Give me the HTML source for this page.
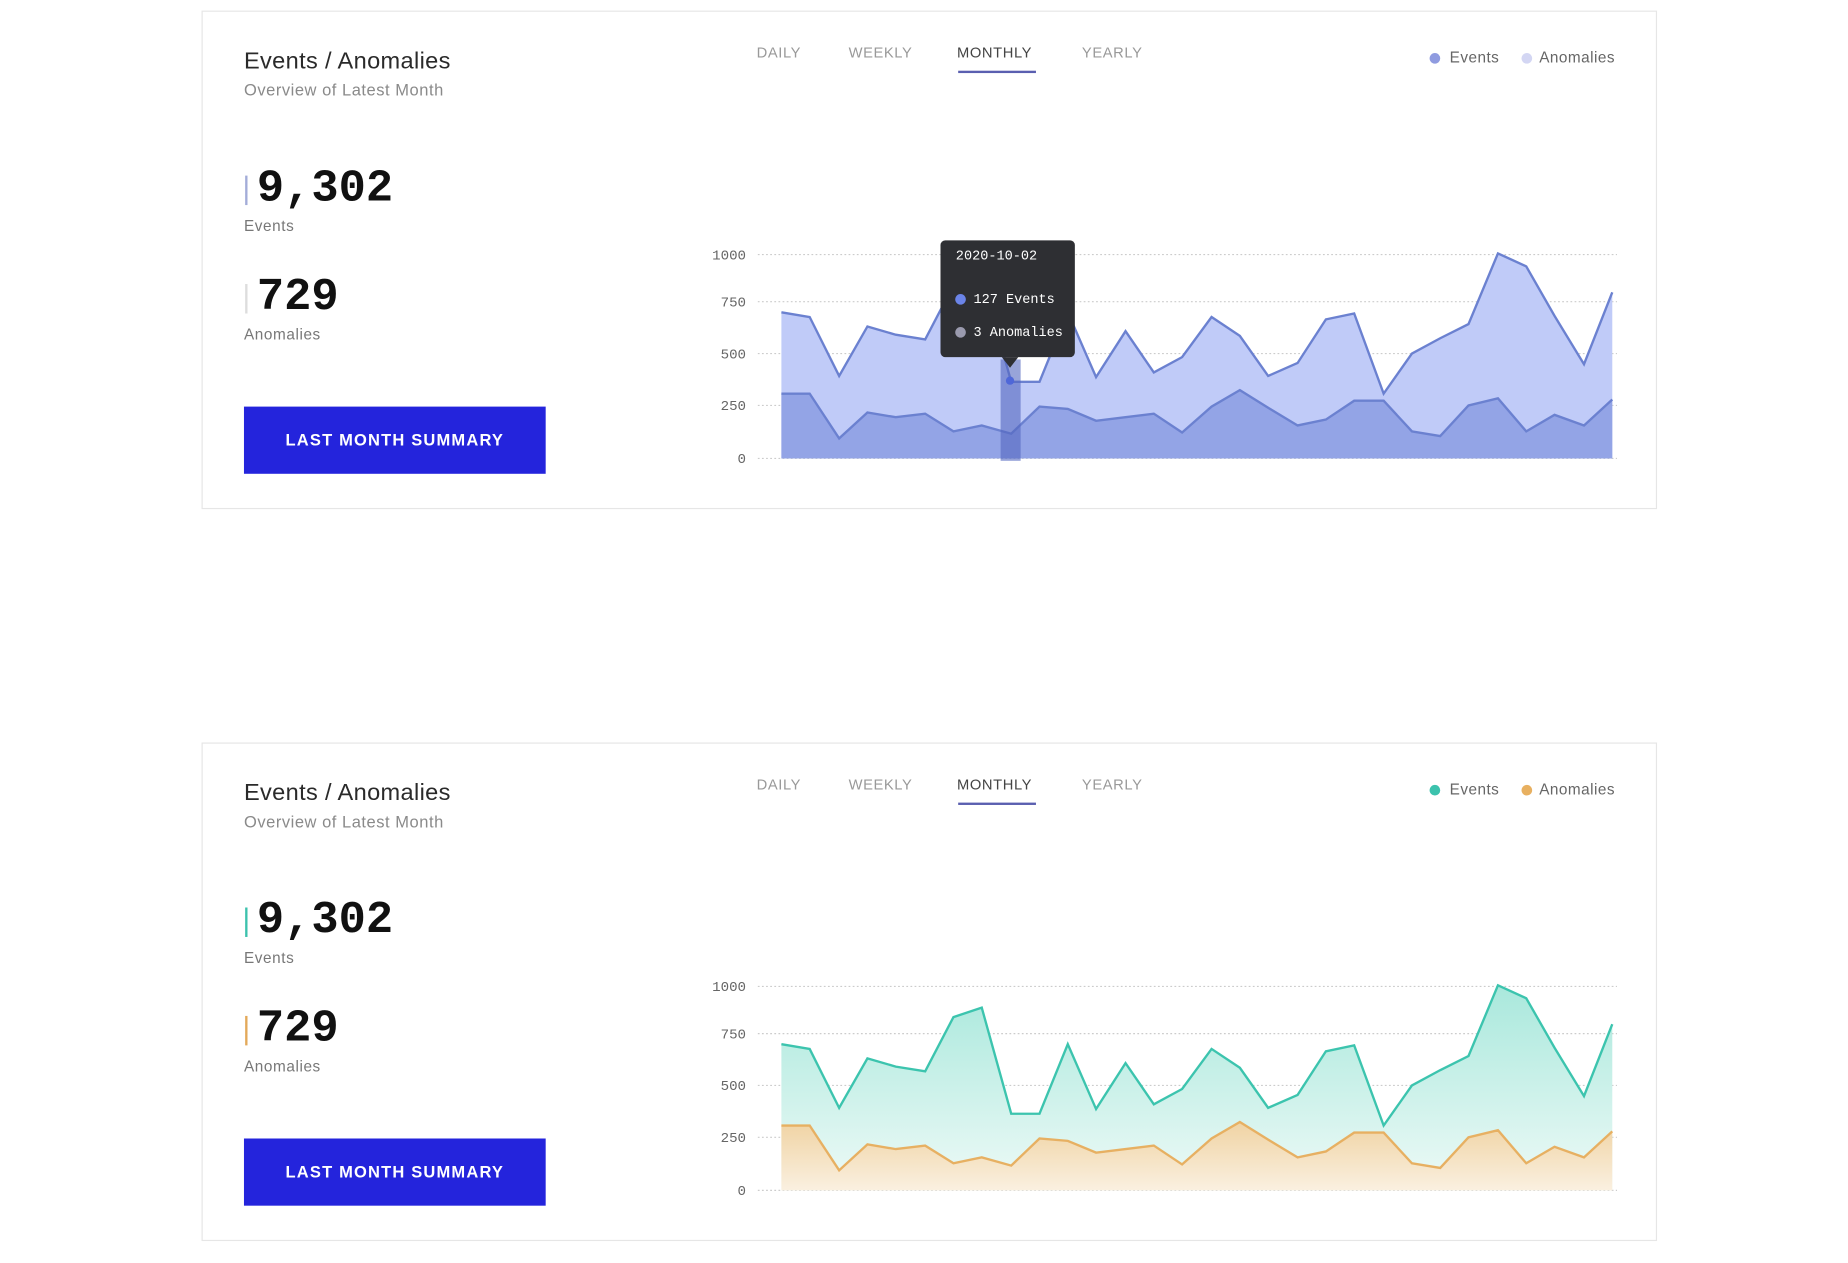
<!DOCTYPE html>
<html><head><meta charset="utf-8">
<style>
html,body{margin:0;padding:0;background:#fff;width:1848px;height:1263px;overflow:hidden}
#w{position:absolute;left:0;top:0;width:1568px;height:1072px;transform:scale(1.17857);transform-origin:0 0;font-family:"Liberation Sans",sans-serif}
.card{position:absolute;left:171px;width:1235px;height:423px;border:1px solid #e6e6e6;box-sizing:border-box;background:#fff}
.t{position:absolute;left:35px;top:31px;font-size:20px;color:#2a2a2a;letter-spacing:.3px;font-weight:normal}
.s{position:absolute;left:35px;top:58px;font-size:14px;color:#8a8a8a;letter-spacing:.45px}
.num{position:absolute;left:35px;font-family:"Liberation Mono",monospace;font-weight:bold;font-size:38.5px;color:#111;padding-left:11px;line-height:40px}
.num:before{content:"";position:absolute;left:1px;top:9px;width:2px;height:25px;background:var(--c)}
.lab{position:absolute;left:35px;font-size:13px;color:#777;letter-spacing:.5px}
.btn{position:absolute;left:35px;top:335px;width:256px;height:57px;background:#2424dc;color:#fff;font-weight:bold;font-size:14px;letter-spacing:1px;text-align:center;line-height:57px}
.tab{position:absolute;top:28px;font-size:12.5px;color:#999;letter-spacing:.5px}
.tab.a{color:#444}
.ul{position:absolute;left:641px;top:50px;width:66px;height:2px;background:#5a5fb0}
.lg{position:absolute;top:31px;font-size:13px;color:#666;letter-spacing:.4px}
.dot{position:absolute;top:35px;width:9px;height:9px;border-radius:50%}
svg{position:absolute;left:0;top:0}
.ax{font-family:"Liberation Mono",monospace;font-size:12px;fill:#666;text-anchor:end}
</style></head><body><div id="w">

<div class="card" style="top:9px">
<div class="t">Events / Anomalies</div><div class="s">Overview of Latest Month</div>
<div class="num" style="top:130px;--c:#a3acd8">9,302</div><div class="lab" style="top:174px">Events</div>
<div class="num" style="top:222px;--c:#ddd">729</div><div class="lab" style="top:266px">Anomalies</div>
<div class="btn">LAST MONTH SUMMARY</div>
<div class="tab" style="left:470px">DAILY</div><div class="tab" style="left:548px">WEEKLY</div><div class="tab a" style="left:640px">MONTHLY</div><div class="tab" style="left:746px">YEARLY</div><div class="ul"></div>
<div class="dot" style="left:1041px;background:#8f9be0"></div><div class="lg" style="left:1058px">Events</div>
<div class="dot" style="left:1119px;background:#d3d6f3"></div><div class="lg" style="left:1134px">Anomalies</div>
</div>

<div class="card" style="top:630px">
<div class="t">Events / Anomalies</div><div class="s">Overview of Latest Month</div>
<div class="num" style="top:130px;--c:#3cc2ad">9,302</div><div class="lab" style="top:174px">Events</div>
<div class="num" style="top:222px;--c:#e3a95a">729</div><div class="lab" style="top:266px">Anomalies</div>
<div class="btn">LAST MONTH SUMMARY</div>
<div class="tab" style="left:470px">DAILY</div><div class="tab" style="left:548px">WEEKLY</div><div class="tab a" style="left:640px">MONTHLY</div><div class="tab" style="left:746px">YEARLY</div><div class="ul"></div>
<div class="dot" style="left:1041px;background:#3cc2ad"></div><div class="lg" style="left:1058px">Events</div>
<div class="dot" style="left:1119px;background:#e8b060"></div><div class="lg" style="left:1134px">Anomalies</div>
</div>

<svg width="1568" height="1072" viewBox="0 0 1568 1072">
<defs>
<g id="grid">
<g stroke="#ccc" stroke-dasharray="1.5 2" stroke-width="1">
<line x1="643" y1="216" x2="1372" y2="216"/><line x1="643" y1="256" x2="1372" y2="256"/><line x1="643" y1="300" x2="1372" y2="300"/><line x1="643" y1="344" x2="1372" y2="344"/><line x1="643" y1="389" x2="1372" y2="389"/>
</g>
<text class="ax" x="633" y="220">1000</text><text class="ax" x="633" y="260">750</text><text class="ax" x="633" y="304">500</text><text class="ax" x="633" y="348">250</text><text class="ax" x="633" y="393">0</text>
</g>
<linearGradient id="gt" x1="0" y1="0" x2="0" y2="1"><stop offset="0" stop-color="#a9e8dc"/><stop offset="1" stop-color="#eefaf7"/></linearGradient>
<linearGradient id="go" x1="0" y1="0" x2="0" y2="1"><stop offset="0" stop-color="#f0d3a3"/><stop offset="1" stop-color="#faf0e0"/></linearGradient>
</defs>

<use href="#grid"/>
<path d="M663,389 L663,265 687,269 712,319 736,277 760,284 785,288 809,242 833,234 858,324 882,324 906,265 930,320 955,281 979,316 1003,303 1028,269 1052,285 1076,319 1101,308 1125,271 1149,266 1174,334 1198,300 1222,287 1246,275 1271,215 1295,226 1319,268 1344,309 1368,248 L1368,389Z" fill="#c0cbf8"/>
<polyline points="663,265 687,269 712,319 736,277 760,284 785,288 809,242 833,234 858,324 882,324 906,265 930,320 955,281 979,316 1003,303 1028,269 1052,285 1076,319 1101,308 1125,271 1149,266 1174,334 1198,300 1222,287 1246,275 1271,215 1295,226 1319,268 1344,309 1368,248" fill="none" stroke="#6b81d0" stroke-width="2"/>
<path d="M663,389 L663,334 687,334 712,372 736,350 760,354 785,351 809,366 833,361 858,368 882,345 906,347 930,357 955,354 979,351 1003,367 1028,345 1052,331 1076,346 1101,361 1125,356 1149,340 1174,340 1198,366 1222,370 1246,344 1271,338 1295,366 1319,352 1344,361 1368,339 L1368,389Z" fill="#93a4e6"/>
<polyline points="663,334 687,334 712,372 736,350 760,354 785,351 809,366 833,361 858,368 882,345 906,347 930,357 955,354 979,351 1003,367 1028,345 1052,331 1076,346 1101,361 1125,356 1149,340 1174,340 1198,366 1222,370 1246,344 1271,338 1295,366 1319,352 1344,361 1368,339" fill="none" stroke="#6b81d0" stroke-width="2"/>
<rect x="849" y="305" width="17" height="86" fill="#5468c0" opacity=".6"/>
<circle cx="857" cy="323" r="3.5" fill="#4f67d8"/>
<rect x="798" y="204" width="114" height="99" rx="4" fill="#2e2f33"/>
<path d="M850,303 L857,312 L864,303Z" fill="#2e2f33"/>
<text x="811" y="220" font-family="Liberation Mono,monospace" font-size="11.5" fill="#fff">2020-10-02</text>
<circle cx="815" cy="254" r="4.5" fill="#6b84e8"/>
<text x="826" y="257" font-family="Liberation Mono,monospace" font-size="11.5" fill="#fff">127 Events</text>
<circle cx="815" cy="282" r="4.5" fill="#9a9aae"/>
<text x="826" y="285" font-family="Liberation Mono,monospace" font-size="11.5" fill="#fff">3 Anomalies</text>

<g transform="translate(0,621)">
<use href="#grid"/>
<path d="M663,389 L663,265 687,269 712,319 736,277 760,284 785,288 809,242 833,234 858,324 882,324 906,265 930,320 955,281 979,316 1003,303 1028,269 1052,285 1076,319 1101,308 1125,271 1149,266 1174,334 1198,300 1222,287 1246,275 1271,215 1295,226 1319,268 1344,309 1368,248 L1368,389Z" fill="url(#gt)"/>
<path d="M663,389 L663,334 687,334 712,372 736,350 760,354 785,351 809,366 833,361 858,368 882,345 906,347 930,357 955,354 979,351 1003,367 1028,345 1052,331 1076,346 1101,361 1125,356 1149,340 1174,340 1198,366 1222,370 1246,344 1271,338 1295,366 1319,352 1344,361 1368,339 L1368,389Z" fill="url(#go)"/>
<polyline points="663,265 687,269 712,319 736,277 760,284 785,288 809,242 833,234 858,324 882,324 906,265 930,320 955,281 979,316 1003,303 1028,269 1052,285 1076,319 1101,308 1125,271 1149,266 1174,334 1198,300 1222,287 1246,275 1271,215 1295,226 1319,268 1344,309 1368,248" fill="none" stroke="#3cc4ae" stroke-width="2"/>
<polyline points="663,334 687,334 712,372 736,350 760,354 785,351 809,366 833,361 858,368 882,345 906,347 930,357 955,354 979,351 1003,367 1028,345 1052,331 1076,346 1101,361 1125,356 1149,340 1174,340 1198,366 1222,370 1246,344 1271,338 1295,366 1319,352 1344,361 1368,339" fill="none" stroke="#e7b062" stroke-width="2"/>
</g>
</svg>
</div></body></html>
